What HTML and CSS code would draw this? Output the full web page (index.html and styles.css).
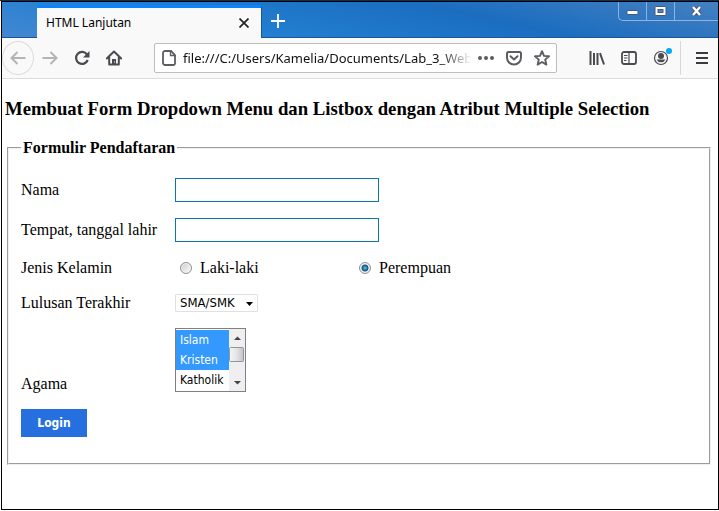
FILE: index.html
```html
<!DOCTYPE html>
<html lang="id">
<head>
<meta charset="utf-8">
<title>HTML Lanjutan</title>
<link rel="stylesheet" href="styles.css">
</head>
<body>
<div class="window">
  <header class="titlebar">
    <div class="tab">
      <span class="tab-title">HTML Lanjutan</span>
      <button class="tab-close" type="button" aria-label="Close tab">
        <svg width="10" height="10" viewBox="0 0 10 10"><path d="M.5 .5l9 9M9.500 .5l-9 9" stroke="#222" stroke-width="1.7" fill="none"/></svg>
      </button>
    </div>
    <button class="new-tab" type="button" aria-label="New tab">
      <svg width="14" height="14" viewBox="0 0 14 14"><path d="M7 0v14M0 7h14" stroke="#fff" stroke-width="1.8" fill="none"/></svg>
    </button>
    <div class="controls">
      <button class="control" type="button" aria-label="Minimize">
        <svg width="13" height="12" viewBox="0 0 13 12"><rect x="1" y="5.5" width="11" height="4" rx="1" fill="#fff" stroke="#45577a"/></svg>
      </button>
      <button class="control" type="button" aria-label="Maximize">
        <svg width="13" height="12" viewBox="0 0 13 12"><rect x="1" y="1.5" width="11" height="9" rx="1" fill="#fff" stroke="#45577a"/><rect x="4" y="4.5" width="5" height="3" fill="#4b86c8" stroke="#45577a"/></svg>
      </button>
      <button class="control control-close" type="button" aria-label="Close">
        <svg width="13" height="12" viewBox="0 0 13 12"><path d="M3 2l7 8M10 2l-7 8" stroke="#45577a" stroke-width="4.4"/><path d="M3 2l7 8M10 2l-7 8" stroke="#fff" stroke-width="2.4"/></svg>
      </button>
    </div>
  </header>

  <nav class="toolbar">
    <button class="tool tool-back" type="button" aria-label="Back">
      <svg width="16" height="16" viewBox="0 0 16 16"><path d="M15.500 8H1.500M7.500 2L1.500 8l6 6" stroke="#b4b4b5" stroke-width="2" fill="none"/></svg>
    </button>
    <button class="tool" type="button" aria-label="Forward">
      <svg width="16" height="16" viewBox="0 0 16 16"><path d="M.5 8h14M8.500 2l6 6-6 6" stroke="#b4b4b5" stroke-width="2" fill="none"/></svg>
    </button>
    <button class="tool" type="button" aria-label="Reload">
      <svg width="16" height="16" viewBox="0 0 16 16"><path d="M13 4.500A6 6 0 1 0 13.700 10" stroke="#4a4a4f" stroke-width="2.200" fill="none"/><path d="M15.500 1v6.500H9z" fill="#4a4a4f"/></svg>
    </button>
    <button class="tool" type="button" aria-label="Home">
      <svg width="16" height="16" viewBox="0 0 16 16"><path d="M.8 8.500L8 1.500l7.200 7M3.200 7v7.500h9.600V7" stroke="#4a4a4f" stroke-width="2" stroke-linejoin="round" stroke-linecap="round" fill="none"/><path d="M6 15V9h4v6z" fill="#4a4a4f"/><path d="M8 11.500h1v1H8z" fill="#f9f9fa"/></svg>
    </button>
    <div class="address">
      <svg class="page-icon" width="14" height="16" viewBox="0 0 14 16"><path d="M3 1h6l4 4v8.500a1.500 1.500 0 0 1-1.500 1.500H3a2 2 0 0 1-2-2V3a2 2 0 0 1 2-2z" stroke="#5c5c61" stroke-width="1.800" fill="none"/><path d="M8.500 1v4.500H13" stroke="#5c5c61" stroke-width="1.300" fill="none"/></svg>
      <input class="url" type="text" aria-label="Address" value="file:///C:/Users/Kamelia/Documents/Lab_3_Web">
      <button class="action" type="button" aria-label="Page actions">
        <svg width="18" height="16" viewBox="0 0 18 16"><g fill="#5c5c61"><circle cx="3" cy="8" r="2"/><circle cx="9" cy="8" r="2"/><circle cx="15" cy="8" r="2"/></g></svg>
      </button>
      <button class="action" type="button" aria-label="Pocket">
        <svg width="16" height="16" viewBox="0 0 16 16"><path d="M2.500 2h11A1.500 1.500 0 0 1 15 3.500V7.500a7 7 0 0 1-14 0V3.500A1.500 1.500 0 0 1 2.500 2z" stroke="#5c5c61" stroke-width="2" fill="none"/><path d="M4.500 6.200L8 9.500l3.500-3.300" stroke="#5c5c61" stroke-width="2" fill="none" stroke-linecap="round" stroke-linejoin="round"/></svg>
      </button>
      <button class="action" type="button" aria-label="Bookmark">
        <svg width="16" height="16" viewBox="0 0 16 16"><path d="M8 1.200l2 4.700 5 .4-3.800 3.300 1.200 5L8 12l-4.400 2.600 1.200-5L1 6.300l5-.4z" stroke="#5c5c61" stroke-width="1.900" stroke-linejoin="round" fill="none"/></svg>
      </button>
    </div>
    <button class="tool" type="button" aria-label="Library">
      <svg width="16" height="16" viewBox="0 0 16 16"><path d="M1.500 1v14M5 3v12M8.500 3v12M11 3.200L15 14.500" stroke="#4a4a4f" stroke-width="2" fill="none"/></svg>
    </button>
    <button class="tool" type="button" aria-label="Sidebars">
      <svg width="16" height="16" viewBox="0 0 16 16"><rect x="1" y="2" width="14" height="12" rx="2" stroke="#4a4a4f" stroke-width="1.800" fill="none"/><path d="M8 2v12M3 5.500h3.500M3 8h3.500M3 10.500h2.500" stroke="#4a4a4f" stroke-width="1.200" fill="none"/></svg>
    </button>
    <button class="tool tool-account" type="button" aria-label="Account">
      <svg width="16" height="16" viewBox="0 0 16 16"><circle cx="8" cy="8" r="6.500" stroke="#4a4a4f" stroke-width="1.200" fill="none"/><circle cx="8" cy="6" r="3" fill="#4a4a4f"/><path d="M3.500 9.500h9a5 5 0 0 1-9 0z" fill="#4a4a4f"/></svg>
      <span class="badge"></span>
    </button>
    <span class="separator"></span>
    <button class="tool" type="button" aria-label="Menu">
      <svg width="16" height="16" viewBox="0 0 16 16"><path d="M2 3h12M2 8h12M2 13h12" stroke="#3c3c40" stroke-width="1.800" fill="none"/></svg>
    </button>
  </nav>

  <main class="page">
    <h3 class="heading">Membuat Form Dropdown Menu dan Listbox dengan Atribut Multiple Selection</h3>
    <form>
      <fieldset class="panel">
        <legend class="legend">Formulir Pendaftaran</legend>
        <div class="rows">
          <div class="row">
            <label for="nama">Nama</label>
            <input class="text" id="nama" type="text">
          </div>
          <div class="row">
            <label for="ttl">Tempat, tanggal lahir</label>
            <input class="text" id="ttl" type="text">
          </div>
          <div class="row">
            <span>Jenis Kelamin</span>
            <div class="radios">
              <label class="choice"><input class="radio" type="radio" name="jk">Laki-laki</label>
              <label class="choice"><input class="radio" type="radio" name="jk" checked>Perempuan</label>
            </div>
          </div>
          <div class="row row-select">
            <label for="lulusan">Lulusan Terakhir</label>
            <div class="dropdown">
              <select class="dropdown-select" id="lulusan"><option>SMA/SMK</option></select>
              <svg class="arrow" width="7" height="4" viewBox="0 0 7 4"><path d="M0 0h7L3.500 4z" fill="#000"/></svg>
            </div>
          </div>
          <div class="row row-list">
            <label for="agama">Agama</label>
            <div class="listbox">
              <select class="list" id="agama" multiple size="3">
                <option selected>Islam</option>
                <option selected>Kristen</option>
                <option>Katholik</option>
              </select>
              <svg width="16" height="62" viewBox="0 0 16 62">
                <defs><linearGradient id="thumb"><stop offset="0" stop-color="#f6f6f6"/><stop offset=".5" stop-color="#e4e4e6"/><stop offset="1" stop-color="#c2c3c7"/></linearGradient></defs>
                <rect width="16" height="62" fill="#efefef"/>
                <path d="M5 11h7L8.500 7.500z" fill="#444"/>
                <rect x=".5" y="18.500" width="14" height="14" rx="1" fill="url(#thumb)" stroke="#959595"/>
                <path d="M5 52h7l-3.500 3.500z" fill="#444"/>
              </svg>
            </div>
          </div>
        </div>
        <button class="login" type="button">Login</button>
      </fieldset>
    </form>
  </main>
</div>
</body>
</html>
```
FILE: styles.css
```css
* {
  box-sizing: border-box;
}

body {
  margin: 0;
  background: #fff;
  border-top: 1px solid #0b2f55;
  font: 16px/18px "Liberation Serif", serif;
  color: #000;
}

button {
  display: flex;
  align-items: center;
  justify-content: center;
  margin: 0;
  padding: 0;
  border: 0;
  background: none;
}

svg {
  display: block;
  flex: none;
}

.window {
  display: flex;
  flex-direction: column;
  min-height: calc(100vh - 2px);
  margin: 0 0 1px 1px;
  border: 1px solid #000;
}

.titlebar {
  display: flex;
  align-items: flex-end;
  height: 36px;
  padding-left: 35px;
  border-bottom: 1px solid #1b5596;
  background: linear-gradient(12deg, #4387d1 0%, #2380d2 30%, #1b6dc0 65%, #4580c0 100%);
}

.tab {
  display: flex;
  align-items: center;
  justify-content: space-between;
  width: 225px;
  height: 33px;
  margin-bottom: -1px;
  padding: 0 12px 0 9px;
  border-top: 3px solid #0a84ff;
  border-right: 1px solid #1b5596;
  background: #f9f9fa;
}

.tab-title {
  font: 12px/16px "Noto Sans", sans-serif;
}

.new-tab {
  width: 32px;
  height: 32px;
}

.controls {
  display: flex;
  align-self: flex-start;
  height: 19px;
  margin-left: auto;
  border: 1px solid #8db3de;
  border-top: 0;
  border-right: 0;
  border-radius: 0 0 0 5px;
}

.control {
  width: 28px;
  border-right: 1px solid #8db3de;
}

.control-close {
  width: 43px;
  border-right: 0;
}

.toolbar {
  display: flex;
  align-items: center;
  height: 41px;
  border-bottom: 1px solid #dcdcdd;
  background: #f9f9fa;
}

.tool {
  flex: none;
  width: 32px;
  height: 32px;
}

.tool-back {
  height: 34px;
  border: 1px solid #dcdcdd;
  border-radius: 50%;
}

.tool-account {
  position: relative;
}

.badge {
  position: absolute;
  top: 6px;
  right: 5px;
  width: 6px;
  height: 6px;
  border-radius: 50%;
  background: #00a8f5;
}

.separator {
  width: 1px;
  height: 34px;
  margin: 0 5px 0 3px;
  background: #d8d8d9;
}

.address {
  display: flex;
  flex: 1;
  align-items: center;
  min-width: 0;
  height: 30px;
  margin: 0 24px;
  padding-left: 7px;
  border: 1px solid #bdbdbf;
  border-radius: 2px;
  background: #fff;
}

.url {
  flex: 1;
  min-width: 0;
  margin-left: 7px;
  padding: 0;
  border: 0;
  outline: 0;
  background: none;
  font: 13px/20px "Noto Sans", sans-serif;
  color: #111;
  mask-image: linear-gradient(to left, transparent, #000 32px);
}

.action {
  flex: none;
  width: 28px;
  height: 28px;
}

.page {
  padding: 19px 7px 0 3px;
}

.heading {
  margin: 0 0 19px;
  line-height: 22px;
  white-space: nowrap;
}

.panel {
  margin: 0 0 0 2px;
  padding: 21px 12px 26px;
  border: 2px groove #f0f0f0;
}

.legend {
  padding: 0 2px;
  font-weight: bold;
}

.rows {
  display: grid;
  gap: 16px;
}

.row {
  display: grid;
  grid-template-columns: 154px 1fr;
  align-items: center;
  min-height: 20px;
}

.row-select {
  min-height: 18px;
}

.row-list {
  align-items: end;
  min-height: 65px;
}

.text {
  width: 204px;
  height: 24px;
  padding: 2px 4px;
  border: 1px solid #0f77a8;
  background: #fff;
}

.radios {
  display: grid;
  grid-template-columns: 179px auto;
  justify-content: start;
  padding-left: 5px;
}

.choice {
  display: flex;
  align-items: center;
  gap: 8px;
}

.radio {
  appearance: none;
  width: 12px;
  height: 12px;
  margin: 0;
  border: 1px solid #8e8f8f;
  border-radius: 50%;
  background: linear-gradient(135deg, #c8cacc, #fff);
  box-shadow: inset 0 0 0 1px #f4f4f4;
}

.radio:checked {
  background: radial-gradient(circle at 50% 50%, #5cc6f0 0, #12507c 3px, #e8eef2 4px);
}

.dropdown,
.listbox {
  position: relative;
  justify-self: start;
}

.dropdown-select {
  display: block;
  appearance: none;
  width: 83px;
  height: 18px;
  padding: 0 4px;
  border: 1px solid #dedfe8;
  border-radius: 1px;
  background: #fff;
  font: 13px/16px "DejaVu Sans Condensed", sans-serif;
  color: #000;
}

.arrow {
  position: absolute;
  top: 8px;
  right: 5px;
  pointer-events: none;
}

.listbox {
  display: flex;
  align-self: start;
  border: 1px solid #7f7f8c;
}

.list {
  width: 53px;
  height: 62px;
  margin: 0;
  padding: 1px 0;
  border: 0;
  border-radius: 0;
  outline: 0;
  overflow: hidden;
  scrollbar-width: none;
  background: #fff;
  font: 12px/20px "DejaVu Sans Condensed", sans-serif;
  color: #000;
}

.list option {
  height: 20px;
  min-height: 20px;
  padding: 3px 4px 0;
}

.list option:checked {
  background: linear-gradient(#3399ff, #3399ff);
  color: #fff;
  -webkit-text-fill-color: #fff;
}

.login {
  width: 66px;
  height: 28px;
  margin-top: 16px;
  background: #266fdf;
  font: bold 12px/16px "DejaVu Sans Condensed", sans-serif;
  color: #fff;
}
```
